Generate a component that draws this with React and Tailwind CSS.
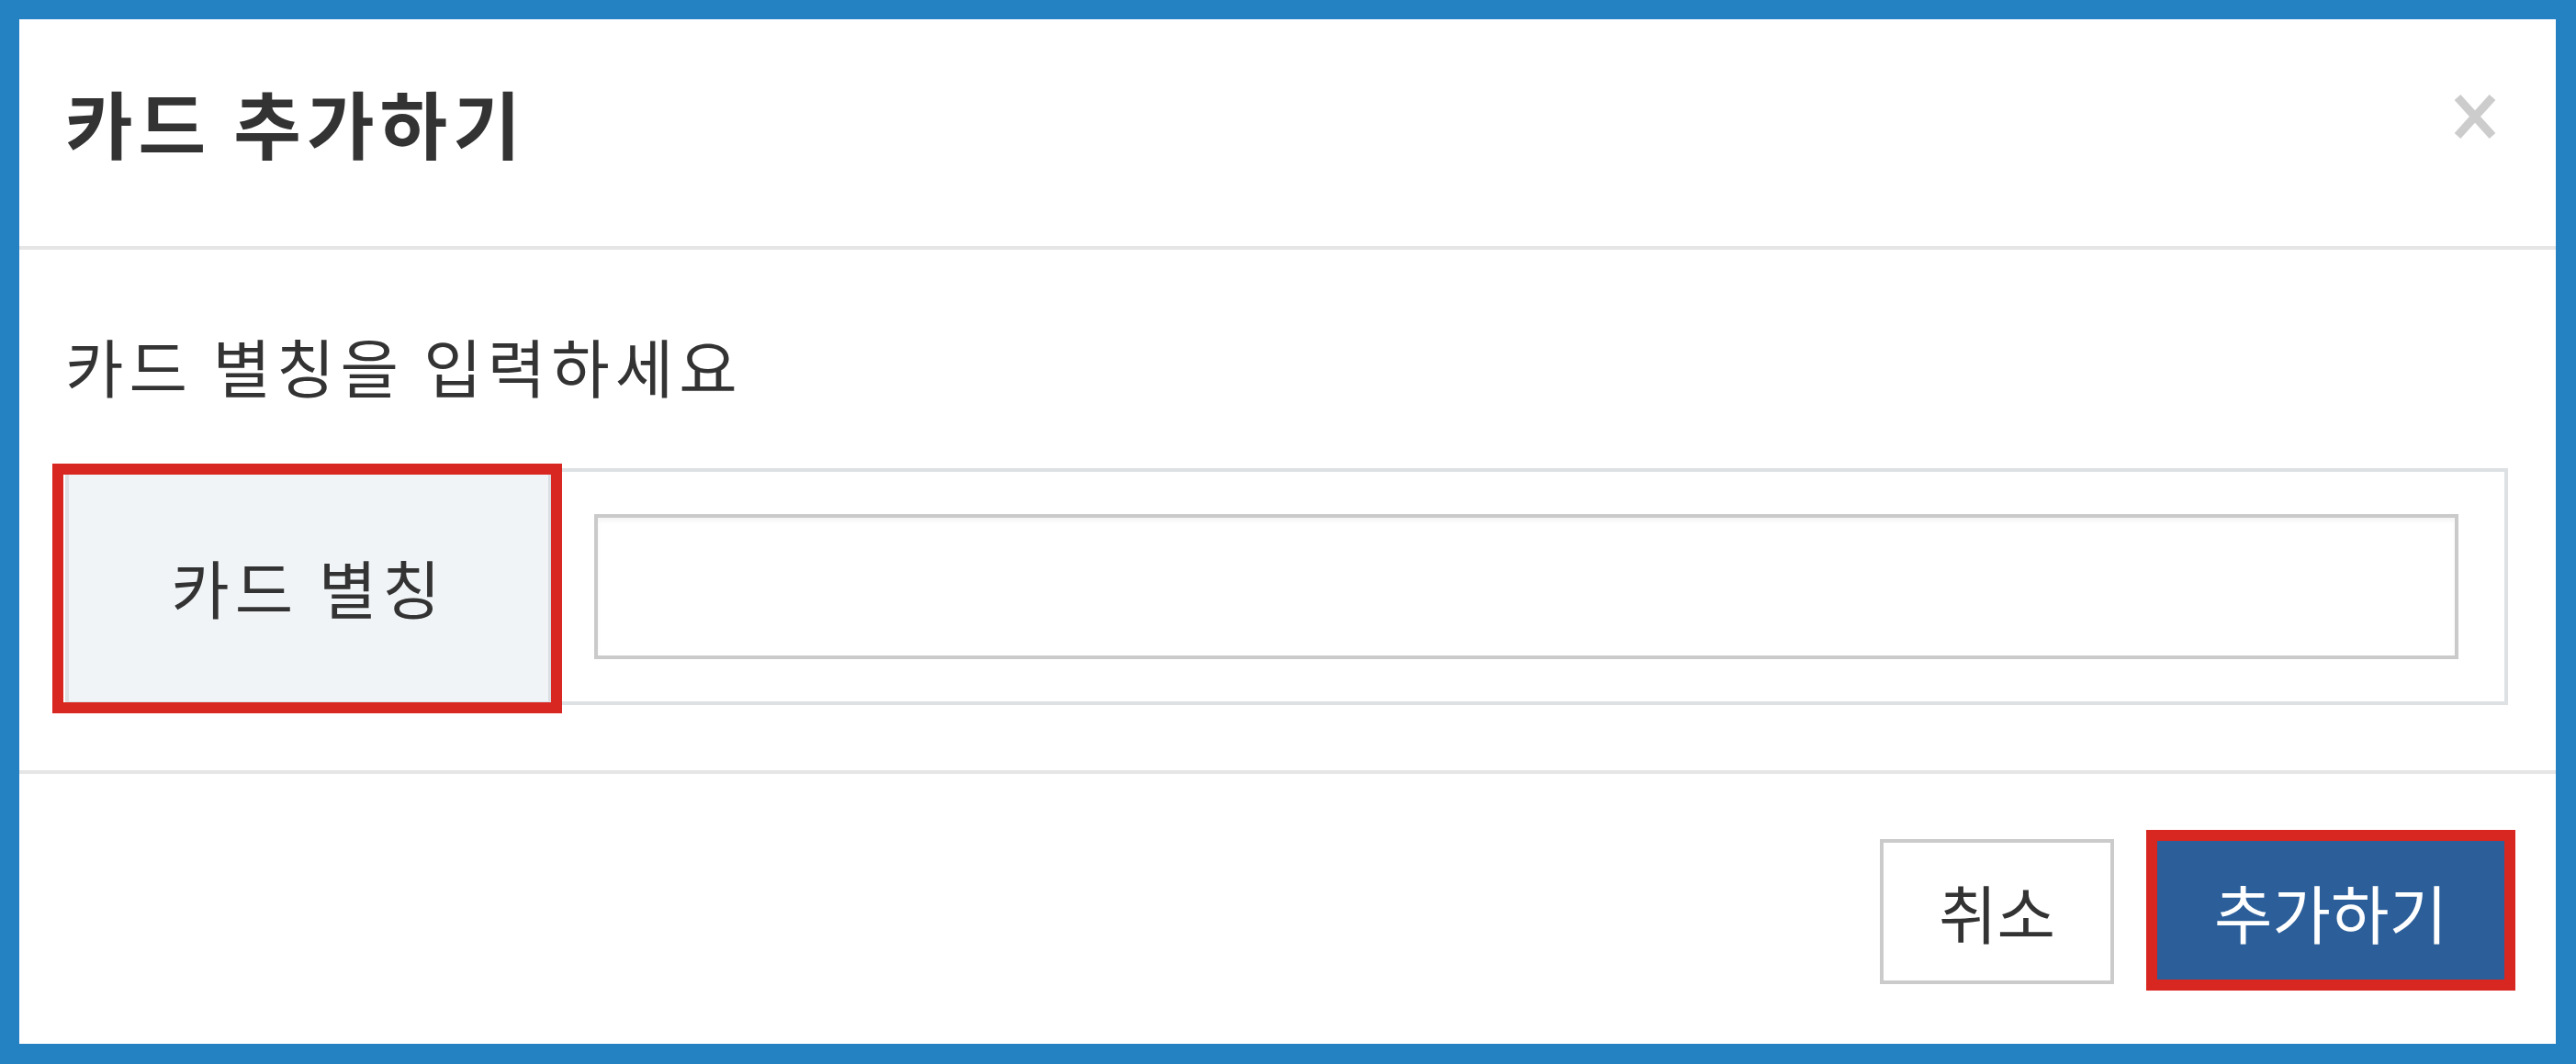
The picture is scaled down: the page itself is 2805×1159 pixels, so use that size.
export default function App() {
  return (
    <div className="w-[2805px] h-[1159px] bg-[#2481c2] pt-[21px] pl-[21px] pr-[22px] pb-[22px] font-['Noto_Sans_CJK_KR','Noto_Sans',sans-serif] text-[#333333]">
      <div className="bg-white h-full flex flex-col">
        {/* header */}
        <div className="h-[251px] shrink-0 border-b-4 border-[#e5e5e5] flex items-center justify-between pl-[50px] pr-[65px] pb-[26px]">
          <h2 className="text-[80px] leading-none font-bold tracking-[6px] text-[#333333]">카드 추가하기</h2>
          <svg width="46" height="50" viewBox="0 0 46 50" className="mb-[9px]">
            <line x1="4" y1="4" x2="42" y2="46" stroke="#cccccc" strokeWidth="9" />
            <line x1="42" y1="4" x2="4" y2="46" stroke="#cccccc" strokeWidth="9" />
          </svg>
        </div>

        {/* body */}
        <div className="h-[567px] shrink-0 flex flex-col pl-[50px] pr-[52px] pt-[92px]">
          <p className="text-[69px] leading-none h-[69px] tracking-[6px]">카드 별칭을 입력하세요</p>
          <div className="relative mt-[77px] h-[258px] border-4 border-[#dde1e4] flex">
            <div className="w-[525px] shrink-0 bg-[#f0f4f7] border-r-[3px] border-[#d9dee2] flex items-center justify-center">
              <span className="text-[69px] leading-none tracking-[6px]">카드 별칭</span>
            </div>
            <div className="flex-1 flex items-center pl-[47px] pr-[50px]">
              <input
                type="text"
                className="w-full h-[158px] border-4 border-[#cacaca] bg-white shadow-[inset_0_4px_4px_rgba(0,0,0,0.04)] outline-none"
              />
            </div>
            <div className="absolute left-[-18px] top-[-9px] w-[555px] h-[272px] border-[12px] border-[#d82620] pointer-events-none" />
          </div>
        </div>

        {/* footer */}
        <div className="flex-1 border-t-4 border-[#e5e5e5] flex items-center justify-end gap-[45px] pr-[54px] pt-[6px]">
          <button className="w-[255px] h-[158px] border-4 border-[#cbcbcb] bg-white text-[69px] leading-none text-[#333333] flex items-center justify-center">
            취소
          </button>
          <div className="relative">
            <button className="w-[382px] h-[158px] bg-[#2c5f9a] text-white text-[69px] leading-none flex items-center justify-center">
              추가하기
            </button>
            <div className="absolute left-[-10px] right-[-10px] top-[-10px] bottom-[-7px] border-[12px] border-[#d82620] pointer-events-none" />
          </div>
        </div>
      </div>
    </div>
  );
}
